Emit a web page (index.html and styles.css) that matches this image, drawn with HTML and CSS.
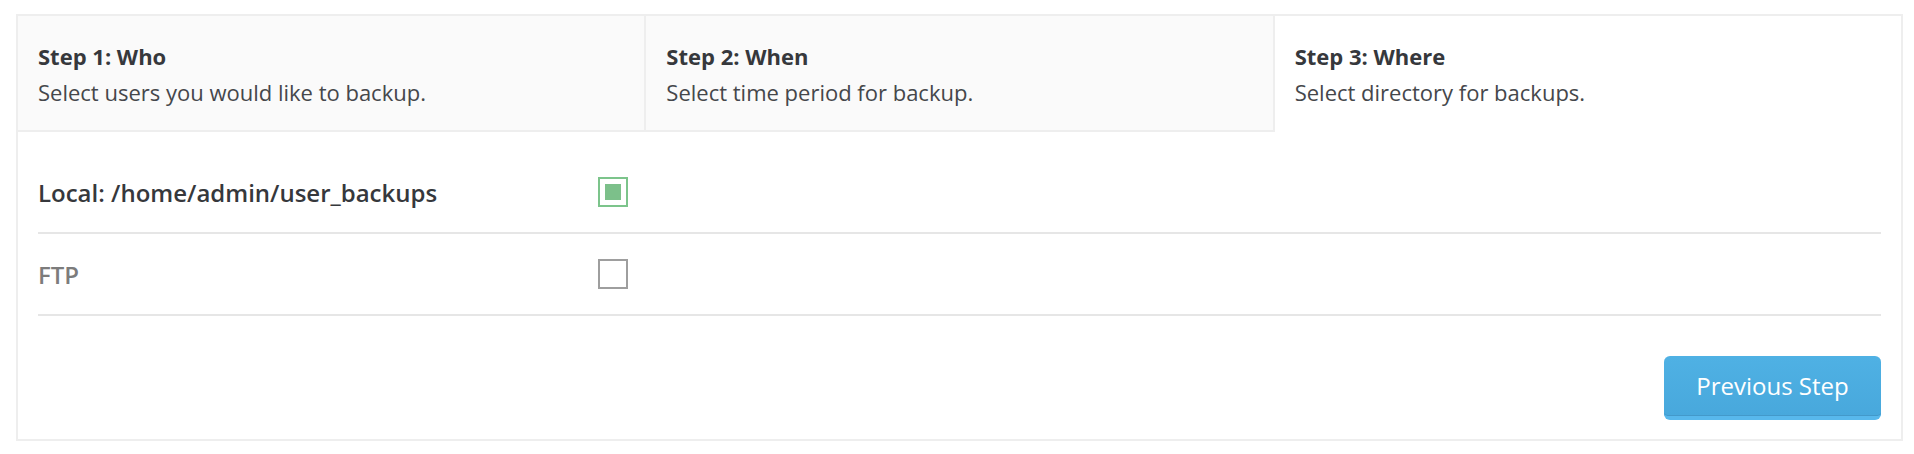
FILE: index.html
```html
<!DOCTYPE html>
<html lang="en">
<head>
<meta charset="utf-8">
<title>Backup wizard</title>
<link rel="stylesheet" href="styles.css">
</head>
<body>
<div class="wizard">
  <div class="steps">
    <div class="step">
      <div class="step-title">Step 1: Who</div>
      <div class="step-desc">Select users you would like to backup.</div>
    </div>
    <div class="step">
      <div class="step-title">Step 2: When</div>
      <div class="step-desc">Select time period for backup.</div>
    </div>
    <div class="step step-active">
      <div class="step-title">Step 3: Where</div>
      <div class="step-desc">Select directory for backups.</div>
    </div>
  </div>
  <div class="panel">
    <div class="option">
      <div class="option-label option-label-on">Local: /home/admin/user_backups</div>
      <span class="check check-on"></span>
    </div>
    <div class="option">
      <div class="option-label">FTP</div>
      <span class="check"></span>
    </div>
    <div class="actions">
      <button class="btn-prev" type="button">Previous Step</button>
    </div>
  </div>
</div>
</body>
</html>
```

FILE: styles.css
```css
html, body {
  margin: 0;
  padding: 0;
  background: #ffffff;
}

body {
  padding: 14px 11px 0 16px;
  font-family: "Open Sans", "Liberation Sans", sans-serif;
  color: #36383c;
}

.wizard {
  border: 2px solid #eeeeee;
  background: #ffffff;
}

.steps {
  display: flex;
}

.step {
  flex: 1 1 0;
  padding: 22px 20px 20px;
  background: #fafafa;
  border-right: 2px solid #eeeeee;
  border-bottom: 2px solid #eeeeee;
  font-size: 22px;
  line-height: 36px;
}

.step:last-child {
  border-right: 0;
}

.step-active {
  background: #ffffff;
  border-bottom-color: transparent;
}

.step-title {
  font-weight: 700;
  color: #36383c;
}

.step-desc {
  color: #45474b;
}

.panel {
  padding: 20px 20px 19px;
}

.option {
  display: flex;
  align-items: center;
  height: 80px;
  border-bottom: 2px solid #e6e6e6;
}

.option-label {
  width: 560px;
  font-size: 24px;
  font-weight: 600;
  color: #7c7c7c;
}

.option-label-on {
  color: #36383c;
}

.check {
  position: relative;
  box-sizing: border-box;
  width: 30px;
  height: 30px;
  border: 2px solid #9e9e9e;
  background: #ffffff;
}

.check-on {
  border-color: #7cc48b;
}

.check-on::after {
  content: "";
  position: absolute;
  left: 5px;
  top: 5px;
  width: 16px;
  height: 16px;
  background: #7cc08a;
}

.actions {
  display: flex;
  justify-content: flex-end;
  margin-top: 40px;
}

.btn-prev {
  box-sizing: border-box;
  width: 217px;
  height: 64px;
  padding: 0 0 2px;
  border: 0;
  border-bottom: 4px solid #58b8ec;
  border-radius: 6px;
  background: linear-gradient(#4fb1e4, #48a8dc);
  box-shadow: inset 0 -1px 0 #4399ca;
  color: #ffffff;
  font-family: "Open Sans", "Liberation Sans", sans-serif;
  font-size: 24px;
  cursor: pointer;
}
```
